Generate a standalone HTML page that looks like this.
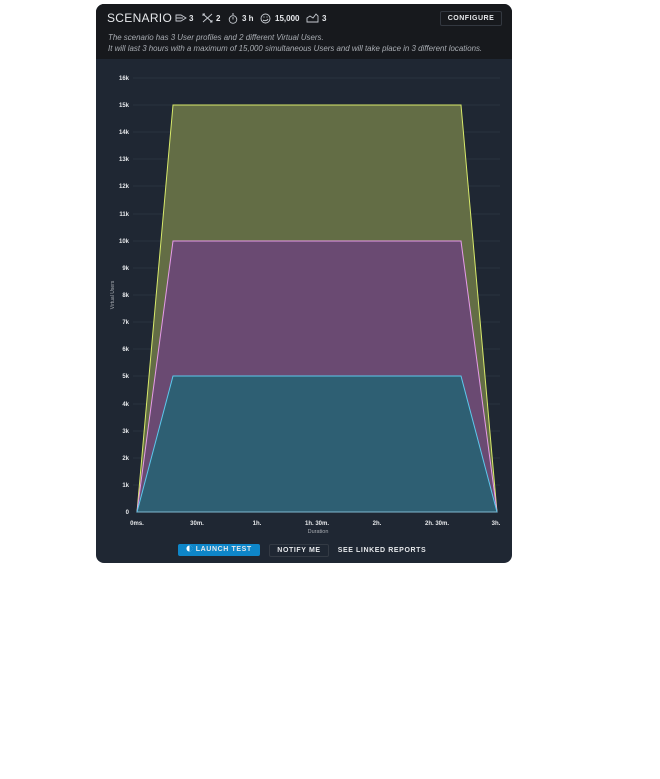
<!DOCTYPE html>
<html><head><style>
body{margin:0;background:#fff;width:660px;height:779px;font-family:"Liberation Sans",sans-serif;}
.card{position:absolute;left:96px;top:4px;width:416px;height:559px;border-radius:8px;overflow:hidden;background:#1f2733;}
.hd{position:absolute;left:0;top:0;width:416px;height:55px;background:#17191d;}
.t{position:absolute;left:11px;top:7px;color:#e6e8eb;font-size:12px;letter-spacing:0.3px;}
.st{position:absolute;top:10px;color:#e6e8eb;font-size:8px;font-weight:bold;}
.ic{position:absolute;top:9px;}
.desc{position:absolute;left:12px;top:28px;color:#a9adb3;font-size:7.9px;font-style:italic;line-height:11px;}
.cfg{position:absolute;left:344px;top:7px;width:60px;height:13px;border:1px solid #333840;border-radius:2px;color:#e6e8eb;font-size:7px;font-weight:bold;text-align:center;line-height:13px;letter-spacing:0.5px;}
.btn{position:absolute;top:540px;height:12px;font-size:7px;font-weight:bold;color:#e6e8eb;text-align:center;line-height:12px;letter-spacing:0.6px;border-radius:2px;}
</style></head><body>
<div class="card">
<div class="hd">
<div class="t">SCENARIO</div>
<svg class="ic" style="left:79px" width="12" height="10" viewBox="0 0 12 10" fill="none" stroke="#c8ccd2" stroke-width="0.9"><path d="M1 2h5l5 3-5 3H1zM1 5h7"/></svg>
<div class="st" style="left:93px">3</div>
<svg class="ic" style="left:106px" width="11" height="10" viewBox="0 0 11 10" fill="none" stroke="#c8ccd2" stroke-width="0.9"><path d="M1 1l9 8M10 1L1 9M3 1h-2v2M8 9h2V7"/></svg>
<div class="st" style="left:120px">2</div>
<svg class="ic" style="left:132px" width="10" height="11" viewBox="0 0 10 11" fill="none" stroke="#c8ccd2" stroke-width="0.9"><circle cx="5" cy="6.5" r="3.8"/><path d="M4 1h2M5 6.5V4"/></svg>
<div class="st" style="left:146px">3 h</div>
<svg class="ic" style="left:164px" width="11" height="11" viewBox="0 0 11 11" fill="none" stroke="#c8ccd2" stroke-width="0.9"><circle cx="5.5" cy="5.5" r="4.5"/><path d="M3 7c1 1 4 1 5-1M3.5 4h1M6.5 4h1"/></svg>
<div class="st" style="left:179px">15,000</div>
<svg class="ic" style="left:210px" width="13" height="10" viewBox="0 0 13 10" fill="none" stroke="#c8ccd2" stroke-width="0.9"><path d="M1 9V5l3-2 3 2 3-4 2 2v6z"/></svg>
<div class="st" style="left:226px">3</div>
<div class="cfg">CONFIGURE</div>
<div class="desc">The scenario has 3 User profiles and 2 different Virtual Users.<br>It will last 3 hours with a maximum of 15,000 simultaneous Users and will take place in 3 different locations.</div>
</div>
<svg style="position:absolute;left:-96px;top:-4px" width="660" height="779">
<g stroke="#36404d" stroke-width="0.6">
<line x1="133" x2="500" y1="78" y2="78"/><line x1="133" x2="500" y1="105" y2="105"/><line x1="133" x2="500" y1="132" y2="132"/><line x1="133" x2="500" y1="159" y2="159"/><line x1="133" x2="500" y1="186" y2="186"/><line x1="133" x2="500" y1="214" y2="214"/><line x1="133" x2="500" y1="241" y2="241"/><line x1="133" x2="500" y1="268" y2="268"/><line x1="133" x2="500" y1="295" y2="295"/><line x1="133" x2="500" y1="322" y2="322"/><line x1="133" x2="500" y1="349" y2="349"/><line x1="133" x2="500" y1="376" y2="376"/><line x1="133" x2="500" y1="404" y2="404"/><line x1="133" x2="500" y1="431" y2="431"/><line x1="133" x2="500" y1="458" y2="458"/><line x1="133" x2="500" y1="485" y2="485"/>
</g>
<polygon points="137,512 173,105 461,105 497,512" fill="#636d45" stroke="#d8ea6a" stroke-width="1"/>
<polygon points="137,512 173,241 461,241 497,512" fill="#6a4a72" stroke="#e59be8" stroke-width="1"/>
<polygon points="137,512 173,376 461,376 497,512" fill="#2e5f73" stroke="#5cc8ec" stroke-width="1"/>
<line x1="137" x2="497" y1="512" y2="512" stroke="#7fb8d0" stroke-width="1"/>
<g fill="#e6e8eb" font-size="6" font-weight="bold" font-family="Liberation Sans" text-anchor="end">
<text x="129" y="80">16k</text><text x="129" y="107">15k</text><text x="129" y="134">14k</text><text x="129" y="161">13k</text><text x="129" y="188">12k</text><text x="129" y="216">11k</text><text x="129" y="243">10k</text><text x="129" y="270">9k</text><text x="129" y="297">8k</text><text x="129" y="324">7k</text><text x="129" y="351">6k</text><text x="129" y="378">5k</text><text x="129" y="406">4k</text><text x="129" y="433">3k</text><text x="129" y="460">2k</text><text x="129" y="487">1k</text><text x="129" y="514">0</text>
</g>
<g fill="#e6e8eb" font-size="6" font-weight="bold" font-family="Liberation Sans" text-anchor="middle">
<text x="137" y="525">0ms.</text><text x="197" y="525">30m.</text><text x="257" y="525">1h.</text><text x="317" y="525">1h. 30m.</text><text x="377" y="525">2h.</text><text x="437" y="525">2h. 30m.</text><text x="496" y="525">3h.</text>
</g>
<text x="318" y="533" fill="#a9adb3" font-size="5.5" font-family="Liberation Sans" text-anchor="middle">Duration</text>
<text transform="translate(114,295) rotate(-90)" fill="#a9adb3" font-size="5" font-family="Liberation Sans" text-anchor="middle">Virtual Users</text>
</svg>
<div class="btn" style="left:82px;width:82px;background:#0e86c9;"><svg width="7" height="7" viewBox="0 0 8 8" style="vertical-align:-1px"><circle cx="4" cy="4" r="3.5" fill="#fff"/><path d="M4 0.5a3.5 3.5 0 0 1 0 7z" fill="#0e86c9"/></svg> LAUNCH TEST</div>
<div class="btn" style="left:173px;width:58px;border:1px solid #333a44;height:11px;line-height:11px;top:540px;">NOTIFY ME</div>
<div class="btn" style="left:240px;width:92px;top:541px;">SEE LINKED REPORTS</div>
</div>
</body></html>
